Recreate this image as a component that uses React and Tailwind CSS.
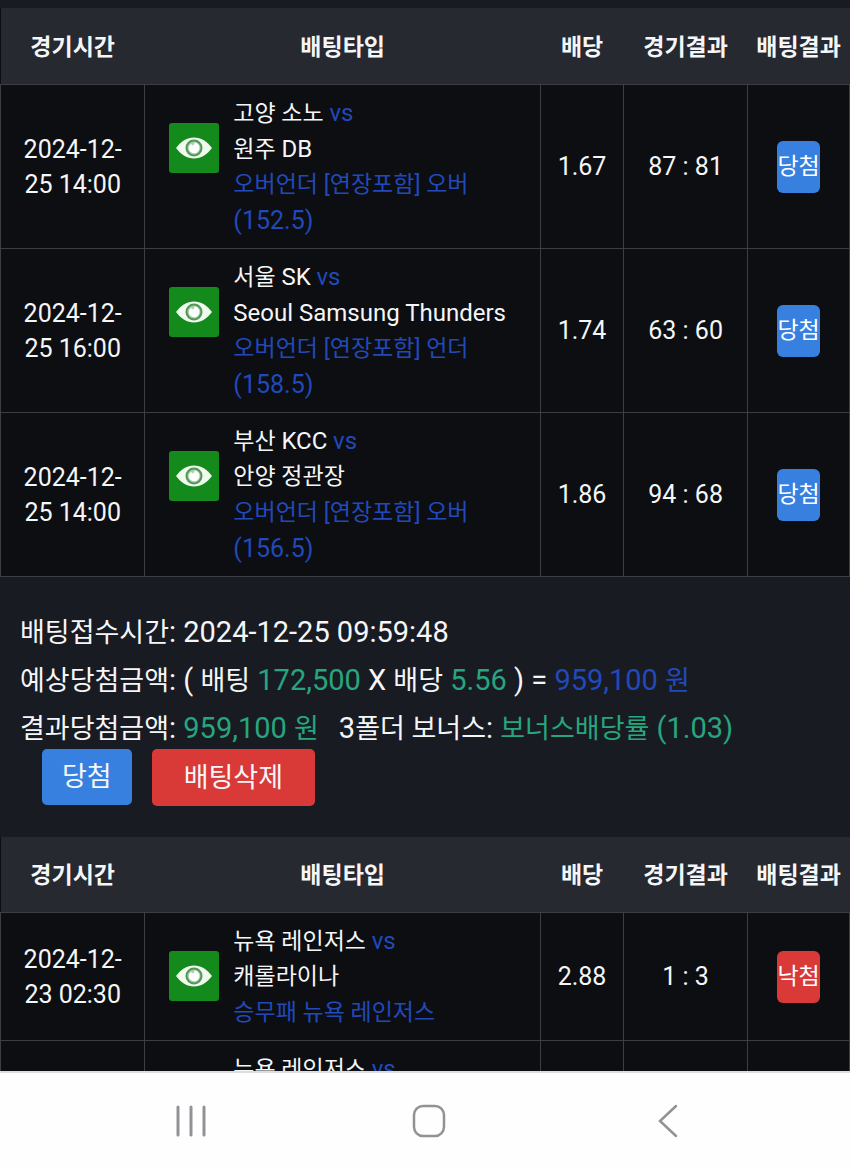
const wonBets = [
  {
    id: 1,
    time: ["2024-12-", "25 14:00"],
    home: "고양 소노",
    away: "원주",
    awayLatin: "DB",
    pick: "오버언더 [연장포함] 오버",
    line: "(152.5)",
    odds: "1.67",
    score: "87 : 81",
    result: "당첨",
  },
  {
    id: 2,
    time: ["2024-12-", "25 16:00"],
    home: "서울",
    homeLatin: "SK",
    awayLatin: "Seoul Samsung Thunders",
    pick: "오버언더 [연장포함] 언더",
    line: "(158.5)",
    odds: "1.74",
    score: "63 : 60",
    result: "당첨",
  },
  {
    id: 3,
    time: ["2024-12-", "25 14:00"],
    home: "부산",
    homeLatin: "KCC",
    away: "안양 정관장",
    pick: "오버언더 [연장포함] 오버",
    line: "(156.5)",
    odds: "1.86",
    score: "94 : 68",
    result: "당첨",
  },
];

const lostBets = [
  {
    id: 4,
    time: ["2024-12-", "23 02:30"],
    home: "뉴욕 레인저스",
    away: "캐롤라이나",
    pick: "승무패 뉴욕 레인저스",
    odds: "2.88",
    score: "1 : 3",
    result: "낙첨",
  },
  {
    id: 5,
    time: [],
    home: "뉴욕 레인저스",
  },
];

function EyeButton() {
  return (
    <button
      type="button"
      aria-label="보기"
      className="mt-7 flex size-[50px] shrink-0 items-center justify-center rounded-[3px] bg-[#138a1b]"
    >
      <svg viewBox="0 0 36 22" className="h-[22px] w-9">
        <path d="M0 11C5 4.5 11 0.5 18 0.5S31 4.5 36 11C31 17.5 25 21.5 18 21.5S5 17.5 0 11Z" fill="#f1faef" />
        <circle cx="18" cy="11" r="7.5" fill="#a9cfaa" stroke="#4f9657" strokeWidth="2" />
        <path d="M15 7L17.2 8.8L18.8 5.4C22 6 23.8 8.4 23.4 11.2C23 14.4 20.6 16.4 17.8 16.2C14.8 16 12.6 13.6 12.8 10.8C12.9 9.2 13.8 7.8 15 7Z" fill="#ffffff" />
      </svg>
    </button>
  );
}

function ResultBadge({ result }) {
  return (
    <button
      type="button"
      className={`inline-flex h-[52px] w-[43px] items-center justify-center rounded-md align-middle text-[23px] whitespace-nowrap text-white ${
        result === "당첨" ? "bg-[#3780df]" : "bg-[#d93a38]"
      }`}
    >
      {result}
    </button>
  );
}

function TeamName({ name, latin }) {
  return (
    <>
      {name}
      {name && latin && " "}
      {latin && <span className="text-2xl leading-9">{latin}</span>}
    </>
  );
}

function BetTable({ bets }) {
  const cell = "border border-[#3b3e43] pt-2.5 pb-[9px]";

  return (
    <table className="w-full table-fixed border-collapse bg-[#0c0e12] text-center text-[25px] leading-9">
      <thead>
        <tr className="h-[76px] bg-[#262930] text-[23px] whitespace-nowrap">
          <th className="w-[17%] pt-1 font-bold">경기시간</th>
          <th className="w-[46.6%] pt-1 font-bold">배팅타입</th>
          <th className="w-[9.8%] pt-1 font-bold">배당</th>
          <th className="w-[14.6%] pt-1 font-bold">경기결과</th>
          <th className="w-[12%] pt-1 font-bold">배팅결과</th>
        </tr>
      </thead>
      <tbody>
        {bets.map((bet) => (
          <tr key={bet.id}>
            <td className={`${cell} leading-[35px]`}>
              {bet.time.map((part) => (
                <div key={part}>{part}</div>
              ))}
            </td>
            <td className={cell}>
              <div className="flex items-start gap-3.5 pl-6 text-left whitespace-nowrap">
                <EyeButton />
                <div className="text-[23px] leading-9">
                  <div className="h-9">
                    <TeamName name={bet.home} latin={bet.homeLatin} />{" "}
                    <span className="text-2xl leading-9 text-[#2149ba]">vs</span>
                  </div>
                  <div className="h-9">
                    <TeamName name={bet.away} latin={bet.awayLatin} />
                  </div>
                  {bet.pick && <div className="h-9 text-[#2149ba]">{bet.pick}</div>}
                  {bet.line && <div className="h-9 text-[25px] leading-9 text-[#2149ba]">{bet.line}</div>}
                </div>
              </div>
            </td>
            <td className={cell}>{bet.odds}</td>
            <td className={cell}>{bet.score}</td>
            <td className={cell}>{bet.result && <ResultBadge result={bet.result} />}</td>
          </tr>
        ))}
      </tbody>
    </table>
  );
}

// Korean words sit a little smaller than the figures beside them
function Ko({ children }) {
  return <span className="text-[27px] leading-12">{children}</span>;
}

function BetSummary() {
  return (
    <section className="px-5 py-[31px] text-[29px] leading-12 whitespace-nowrap">
      <p className="h-12">
        <Ko>배팅접수시간</Ko>: 2024-12-25 09:59:48
      </p>
      <p className="h-12">
        <Ko>예상당첨금액</Ko>: ( <Ko>배팅</Ko> <span className="text-[#27a67e]">172,500</span> X{" "}
        <Ko>배당</Ko> <span className="text-[#27a67e]">5.56</span> ) ={" "}
        <span className="text-[#2149ba]">
          959,100 <Ko>원</Ko>
        </span>
      </p>
      <p className="h-12">
        <Ko>결과당첨금액</Ko>:{" "}
        <span className="mr-5 text-[#27a67e]">
          959,100 <Ko>원</Ko>
        </span>
        3<Ko>폴더 보너스</Ko>:{" "}
        <span className="text-[#27a67e]">
          <Ko>보너스배당률</Ko> (1.03)
        </span>
      </p>
      <div className="-mt-[3px] flex items-start gap-5 pl-[22px]">
        <button type="button" className="h-14 rounded-[5px] bg-[#3780df] px-5">
          <Ko>당첨</Ko>
        </button>
        <button type="button" className="h-[57px] rounded-[5px] bg-[#d93a38] px-8">
          <Ko>배팅삭제</Ko>
        </button>
      </div>
    </section>
  );
}

function NavBar() {
  return (
    <nav className="flex h-[99px] shrink-0 items-center border-t-2 border-[#dcdde1] bg-[#fefefe] pr-[63px] pb-0.5 pl-[72px] text-[#929296]">
      <button type="button" aria-label="최근 앱" className="flex flex-1 justify-center">
        <svg viewBox="0 0 34 34" className="size-[34px]" fill="none" stroke="currentColor" strokeWidth="3" strokeLinecap="round">
          <path d="M4 3V31M17 3V31M30 3V31" />
        </svg>
      </button>
      <button type="button" aria-label="홈" className="flex flex-1 justify-center">
        <svg viewBox="0 0 34 34" className="size-[34px]" fill="none" stroke="currentColor" strokeWidth="2.5">
          <rect x="2" y="2" width="30" height="30" rx="9" />
        </svg>
      </button>
      <button type="button" aria-label="뒤로" className="flex flex-1 justify-center">
        <svg viewBox="0 0 34 34" className="size-[34px]" fill="none" stroke="currentColor" strokeWidth="2.5" strokeLinecap="round">
          <path d="M25 2L9 17L25 32" />
        </svg>
      </button>
    </nav>
  );
}

function App() {
  return (
    <div className="flex h-screen flex-col overflow-hidden bg-[#191b23] font-['Roboto','Noto_Sans_CJK_KR',sans-serif] text-[#f5f6f8]">
      <main className="min-h-0 flex-1 overflow-hidden pt-2">
        <BetTable bets={wonBets} />
        <BetSummary />
        <BetTable bets={lostBets} />
      </main>
      <NavBar />
    </div>
  );
}

export default App;
